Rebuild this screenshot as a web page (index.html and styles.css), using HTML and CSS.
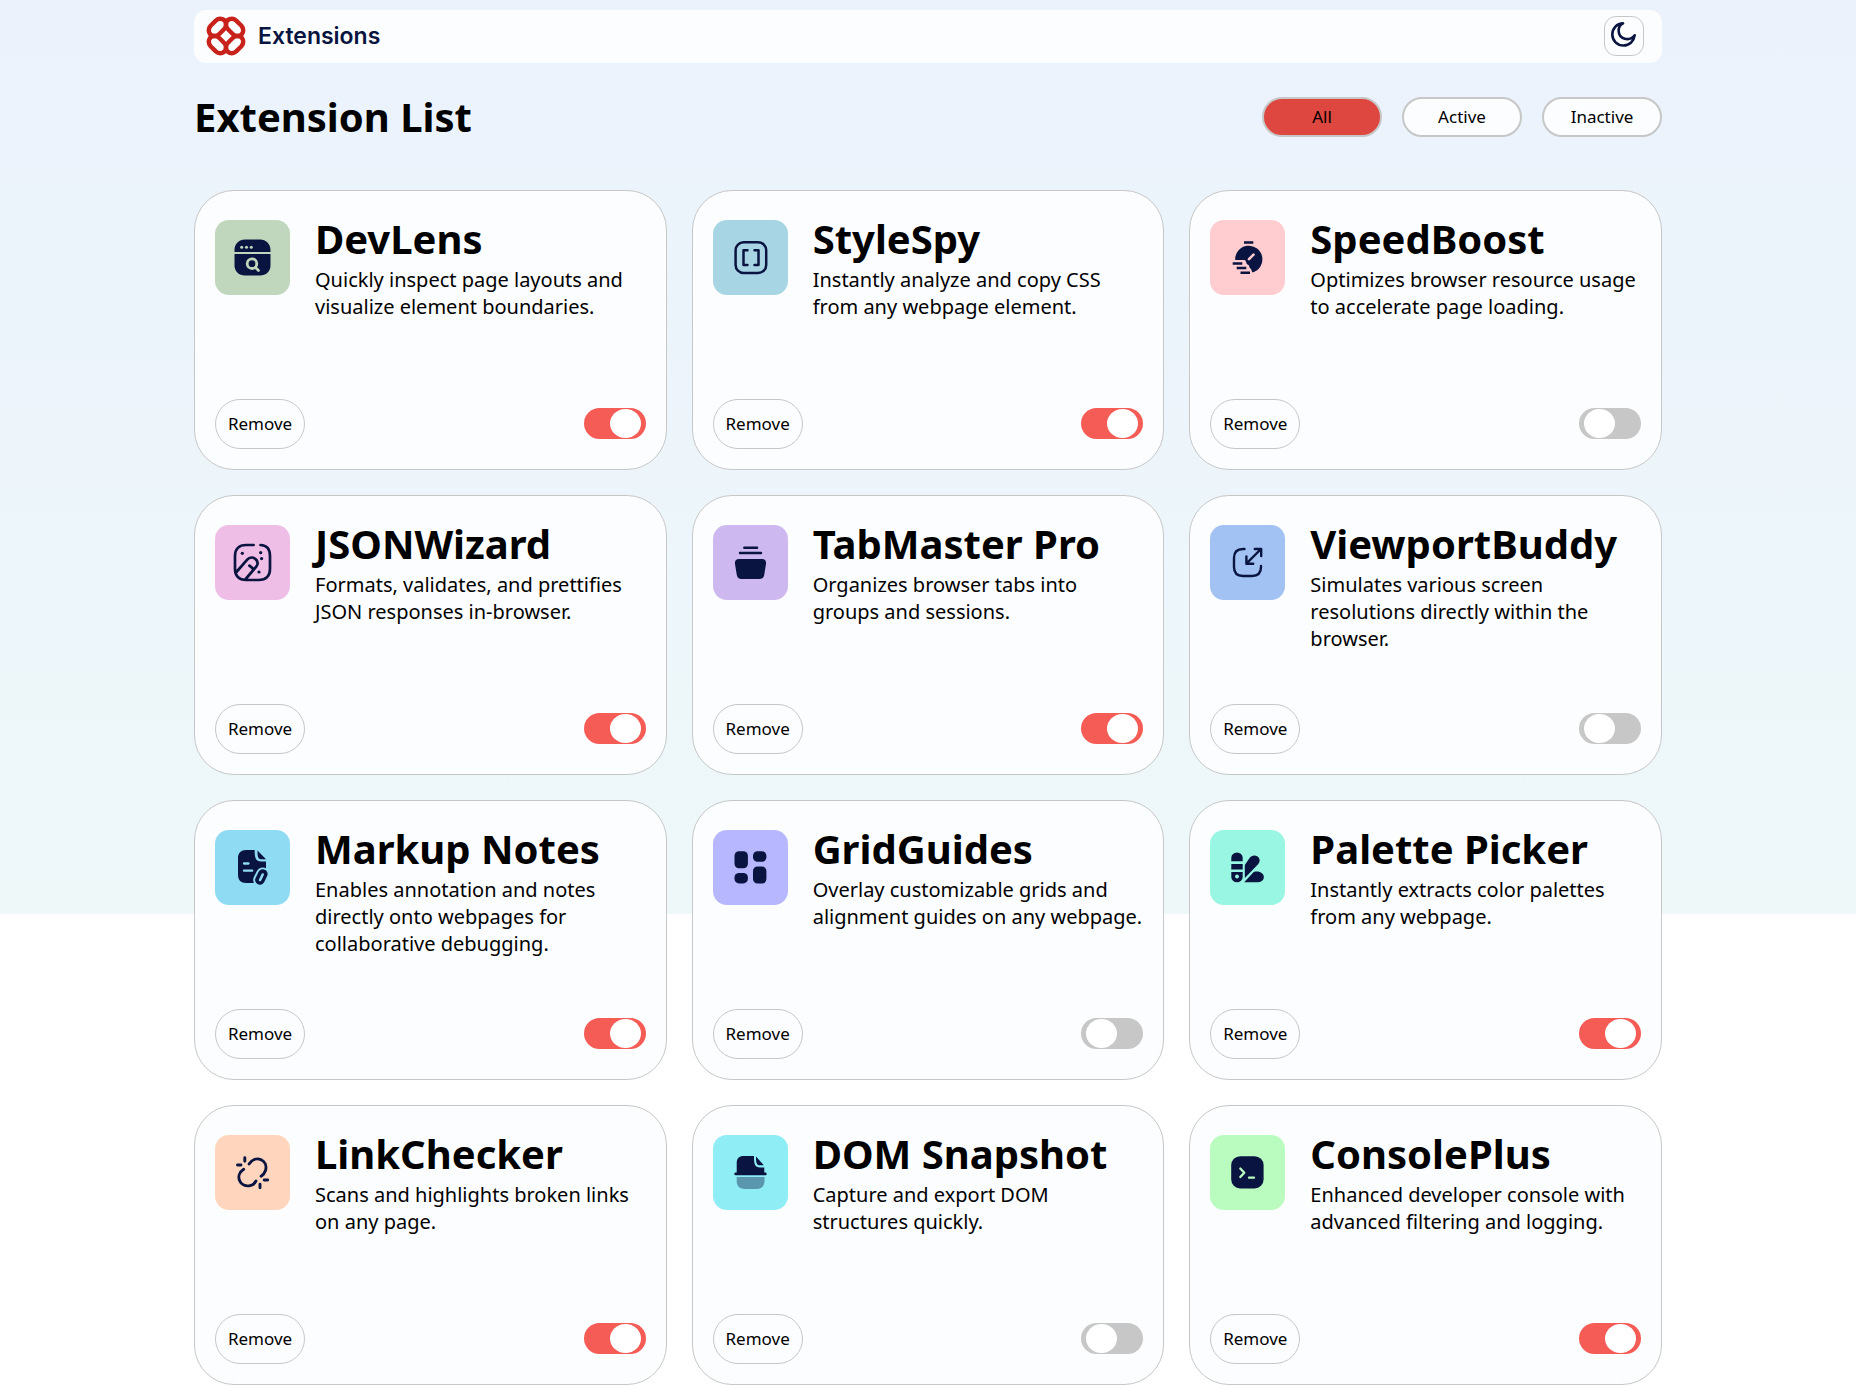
FILE: index.html
```html
<!DOCTYPE html>
<html lang="en">
<head>
<meta charset="utf-8">
<meta name="viewport" content="width=device-width, initial-scale=1">
<title>Extensions</title>
<link rel="stylesheet" href="styles.css">
</head>
<body>
<div class="page">
  <header class="topbar">
    <a class="brand" href="#">
      <svg class="brand-mark" viewBox="0 0 40 40" fill="none" stroke="#c8221b" stroke-width="4.400" aria-hidden="true">
        <g id="lobe"><path d="M4.600 9.800 9.800 4.600C13.600 1.200 20 3 20 8.200c0 2.400-.8 3.900-2 5.100L13.300 18c-1.200 1.200-2.700 2-5.100 2C3 20 1.200 13.600 4.600 9.800Z"/></g>
        <use href="#lobe" transform="rotate(90 20 20)"/>
        <use href="#lobe" transform="rotate(180 20 20)"/>
        <use href="#lobe" transform="rotate(270 20 20)"/>
      </svg>
      <span>Extensions</span>
    </a>
    <button class="theme-button" type="button" aria-label="Switch theme">
      <svg class="moon" viewBox="0 0 25 25" fill="none" stroke="#091540" stroke-width="2.600" stroke-linejoin="round" aria-hidden="true"><path d="M12 1.300C6 1.300 1.300 6.500 1.300 12.500c0 6.300 5 11 11.200 11 5.700 0 10.300-4 11.200-10.200C18.500 20 7.800 17.500 7.600 8.500c0-3 1.600-5.700 4.400-7.200Z"/></svg>
    </button>
  </header>

  <main>
    <div class="list-head">
      <h1>Extension List</h1>
      <div class="filters">
        <button class="filter filter-selected" type="button">All</button>
        <button class="filter" type="button">Active</button>
        <button class="filter" type="button">Inactive</button>
      </div>
    </div>

    <div class="cards">
      <article class="card">
        <div class="card-main">
          <svg class="tile sage" viewBox="0 0 75 75" aria-hidden="true"><path fill="#091540" d="M19.500 32v-2c0-6 4.500-10.500 10.500-10.500h15c6 0 10.500 4.500 10.500 10.500v2ZM19.500 34h36v11.500c0 6-4.500 10-10.500 10H30c-6 0-10.500-4-10.500-10Z"/><g fill="currentColor"><circle cx="26.700" cy="27.300" r="1.500"/><circle cx="31.500" cy="27.300" r="1.500"/><circle cx="36.300" cy="27.300" r="1.500"/></g><path d="m40.500 47.500 3 3" stroke="currentColor" stroke-width="2.600" stroke-linecap="round"/><circle cx="37" cy="43.700" r="4.800" fill="none" stroke="currentColor" stroke-width="2.800"/></svg>
          <div><h2>DevLens</h2><p>Quickly inspect page layouts and visualize element boundaries.</p></div>
        </div>
        <div class="card-actions"><button class="remove" type="button">Remove</button><input class="switch" type="checkbox" aria-label="Enable DevLens" checked></div>
      </article>

      <article class="card">
        <div class="card-main">
          <svg class="tile sky" viewBox="0 0 75 75" fill="none" stroke="#091540" stroke-width="2.500" stroke-linecap="round" stroke-linejoin="round" aria-hidden="true"><rect x="22.600" y="22.300" width="30.600" height="30.600" rx="8"/><path d="M34.500 30.200h-4v14.800h4M41.500 30.200h4v14.800h-4"/></svg>
          <div><h2>StyleSpy</h2><p>Instantly analyze and copy CSS from any webpage element.</p></div>
        </div>
        <div class="card-actions"><button class="remove" type="button">Remove</button><input class="switch" type="checkbox" aria-label="Enable StyleSpy" checked></div>
      </article>

      <article class="card">
        <div class="card-main">
          <svg class="tile rose" viewBox="0 0 75 75" aria-hidden="true"><path fill="#091540" d="M25.200 40a13.600 13.600 0 1 1 17.300 12.400c-1-.6-.7-3-1.800-3.600-1.700-.6-1-3.200-2.200-3.800-1.500-.6-2-1-2.200-2.400-.3-2-1.300-2.600-3-2.600Z"/><path d="m39 39.200 4.500-4.500" stroke="currentColor" stroke-width="2.600" stroke-linecap="round"/><path fill="none" stroke="#091540" stroke-width="2.500" d="M34 22.400h9.300M22.700 43.500h9.600M26.700 48h9.600M30.500 52.700H40"/></svg>
          <div><h2>SpeedBoost</h2><p>Optimizes browser resource usage to accelerate page loading.</p></div>
        </div>
        <div class="card-actions"><button class="remove" type="button">Remove</button><input class="switch" type="checkbox" aria-label="Enable SpeedBoost"></div>
      </article>

      <article class="card">
        <div class="card-main">
          <svg class="tile pink" viewBox="0 0 75 75" fill="none" stroke="#091540" stroke-width="2.700" stroke-linecap="round" aria-hidden="true"><path d="M38.600 20H31c-7 0-11 4-11 11v13c0 7 4 11 11 11h13c7 0 11-4 11-11V31c0-7-3.500-10.700-9.500-11M21 47.500l11.200-12.800c4.800-5.400 13.600 1 9.200 6.800L30.700 54M34.400 40.600l3.600 3"/><g fill="#091540" stroke="none"><circle cx="27.300" cy="28.300" r="1.600"/><circle cx="45.700" cy="27.700" r="1.600"/><circle cx="46.600" cy="33.600" r="1.600"/><circle cx="44" cy="47" r="1.600"/></g></svg>
          <div><h2>JSONWizard</h2><p>Formats, validates, and prettifies JSON responses in-browser.</p></div>
        </div>
        <div class="card-actions"><button class="remove" type="button">Remove</button><input class="switch" type="checkbox" aria-label="Enable JSONWizard" checked></div>
      </article>

      <article class="card">
        <div class="card-main">
          <svg class="tile lilac" viewBox="0 0 75 75" aria-hidden="true"><path stroke="#091540" stroke-width="2.400" stroke-linecap="round" d="M31.300 22.700h12.800M27 28h21"/><path fill="#091540" d="M26 34h23c3 0 4.500 2 4 5l-1.700 10.500c-.5 3-2 4.500-5 4.500H28.700c-3 0-4.500-1.500-5-4.500L22 39c-.5-3 1-5 4-5Z"/></svg>
          <div><h2>TabMaster Pro</h2><p>Organizes browser tabs into groups and sessions.</p></div>
        </div>
        <div class="card-actions"><button class="remove" type="button">Remove</button><input class="switch" type="checkbox" aria-label="Enable TabMaster Pro" checked></div>
      </article>

      <article class="card">
        <div class="card-main">
          <svg class="tile blue" viewBox="0 0 75 75" fill="none" stroke="#091540" stroke-width="2.400" stroke-linecap="round" stroke-linejoin="round" aria-hidden="true"><path d="M34.500 24H33c-6 0-9 3-9 9v9c0 6 3 9 9 9h9c6 0 9-3 9-9v-1M51 24 36.400 38.700M44.800 24H51.200v7M36.400 31.500v7.300h6.800"/></svg>
          <div><h2>ViewportBuddy</h2><p>Simulates various screen resolutions directly within the browser.</p></div>
        </div>
        <div class="card-actions"><button class="remove" type="button">Remove</button><input class="switch" type="checkbox" aria-label="Enable ViewportBuddy"></div>
      </article>

      <article class="card">
        <div class="card-main">
          <svg class="tile cyan" viewBox="0 0 75 75" aria-hidden="true"><path fill="#091540" d="M39.700 20c-.1 7 .8 11.500 6.300 11.500h5V53H31c-5 0-8-3-8-8V28c0-5 3-8 8-8ZM42.500 20.500l8.500 8.800h-4c-3.700 0-4.600-2-4.500-8.800Z"/><path stroke="currentColor" stroke-width="2.300" stroke-linecap="round" d="M29 33.500h4.500M29 40.700h8.200"/><path stroke="currentColor" stroke-width="14" stroke-linecap="round" d="m48 44.500-2.800 5.500"/><path stroke="#091540" stroke-width="9.600" stroke-linecap="round" d="m47.800 44-2.900 6"/><path stroke="currentColor" stroke-width="2.600" stroke-linecap="round" d="m47.700 44.500-2.600 5.500"/></svg>
          <div><h2>Markup Notes</h2><p>Enables annotation and notes directly onto webpages for collaborative debugging.</p></div>
        </div>
        <div class="card-actions"><button class="remove" type="button">Remove</button><input class="switch" type="checkbox" aria-label="Enable Markup Notes" checked></div>
      </article>

      <article class="card">
        <div class="card-main">
          <svg class="tile violet" viewBox="0 0 75 75" fill="#091540" aria-hidden="true"><rect x="21.500" y="21.200" width="13.400" height="17" rx="4.500"/><rect x="40" y="21.200" width="13.400" height="10.600" rx="4.500"/><rect x="21.500" y="43" width="13.400" height="10.400" rx="4.500"/><rect x="40" y="36.500" width="13.400" height="17" rx="4.500"/></svg>
          <div><h2>GridGuides</h2><p>Overlay customizable grids and alignment guides on any webpage.</p></div>
        </div>
        <div class="card-actions"><button class="remove" type="button">Remove</button><input class="switch" type="checkbox" aria-label="Enable GridGuides"></div>
      </article>

      <article class="card">
        <div class="card-main">
          <svg class="tile mint" viewBox="0 0 75 75" fill="#091540" aria-hidden="true"><path d="M21.300 31.200v-3.500a5.700 5.200 0 0 1 11.400 0v3.500ZM21.300 34h11.400v5.500H21.300ZM21.300 42h11.400v5a5.700 5.200 0 0 1-11.400 0ZM34.800 35l4.600-6.700c4.500-6.500 14-.5 8.700 6L34.800 48ZM34.200 52.200 43 42.800c1-1 2-1.200 3.500-1.200 9.600 0 9.600 10.600 1.500 10.600Z"/><circle cx="27" cy="46.500" r="1.900" fill="currentColor"/></svg>
          <div><h2>Palette Picker</h2><p>Instantly extracts color palettes from any webpage.</p></div>
        </div>
        <div class="card-actions"><button class="remove" type="button">Remove</button><input class="switch" type="checkbox" aria-label="Enable Palette Picker" checked></div>
      </article>

      <article class="card">
        <div class="card-main">
          <svg class="tile peach" viewBox="0 0 75 75" fill="none" stroke="#091540" stroke-width="2.900" stroke-linecap="round" aria-hidden="true"><path d="M34 29C40.500 19 53.500 25 50.500 35.500c-.8 2.600-2.200 4.200-4.400 5.700M28.700 34.300C19.500 40 24.500 53.500 36 50.300c2-.6 3.800-2 5-4.300M22.500 30H26M29.800 22.700v3.500M45 49.200v3.500M49.200 45h3.500"/></svg>
          <div><h2>LinkChecker</h2><p>Scans and highlights broken links on any page.</p></div>
        </div>
        <div class="card-actions"><button class="remove" type="button">Remove</button><input class="switch" type="checkbox" aria-label="Enable LinkChecker" checked></div>
      </article>

      <article class="card">
        <div class="card-main">
          <svg class="tile aqua" viewBox="0 0 75 75" fill="#091540" aria-hidden="true"><path d="M23.700 37.500V28c0-4.500 2.500-7 7-7H41c-.1 7 .5 11.500 6 11.500h4.300v5h1a1.400 1.400 0 0 1 0 2.800H22.700a1.400 1.400 0 0 1 0-2.800ZM43 21.500l7.800 8.800h-3.500c-3.600 0-4.400-2-4.300-8.800Z"/><path fill-opacity=".4" d="M23.700 42h27.800v4c0 5-3 8-8 8H31.700c-5 0-8-3-8-8Z"/></svg>
          <div><h2>DOM Snapshot</h2><p>Capture and export DOM structures quickly.</p></div>
        </div>
        <div class="card-actions"><button class="remove" type="button">Remove</button><input class="switch" type="checkbox" aria-label="Enable DOM Snapshot"></div>
      </article>

      <article class="card">
        <div class="card-main">
          <svg class="tile green" viewBox="0 0 75 75" fill="none" stroke="currentColor" stroke-width="2.300" stroke-linecap="round" stroke-linejoin="round" aria-hidden="true"><rect x="21.200" y="21.200" width="32.400" height="32.200" rx="9" fill="#091540" stroke="none"/><path d="m30.300 33.500 4 4.300-4 4.200M39 42.700h5"/></svg>
          <div><h2>ConsolePlus</h2><p>Enhanced developer console with advanced filtering and logging.</p></div>
        </div>
        <div class="card-actions"><button class="remove" type="button">Remove</button><input class="switch" type="checkbox" aria-label="Enable ConsolePlus" checked></div>
      </article>
    </div>
  </main>
</div>
</body>
</html>
```

FILE: styles.css
```css
* {
  box-sizing: border-box;
}

html {
  background: #fff linear-gradient(180deg, #ebf2fc 0%, #eef8f9 100%) no-repeat;
  background-size: 100% 66vh;
}

body {
  margin: 0;
  font: 20px/27px "Noto Sans", sans-serif;
  color: #000;
}

h1,
h2,
p {
  margin: 0;
}

h1,
h2 {
  font-size: 40px;
  line-height: 54px;
  font-weight: 700;
}

button {
  font: 17px/22px "Noto Sans", sans-serif;
  color: #000;
  background: #fcfdff;
  border: 1px solid #c7c7c7;
  padding: 0;
  cursor: pointer;
}

.page {
  max-width: 1468px;
  margin: 0 auto;
  padding-top: 10px;
}

.topbar {
  display: flex;
  align-items: center;
  justify-content: space-between;
  padding: 6px 18px 7px 12px;
  border-radius: 12px;
  background: #fcfdff;
}

.brand {
  display: flex;
  align-items: center;
  gap: 12px;
  color: #091540;
  font: 600 23px/28px Inter, sans-serif;
  text-decoration: none;
}

.brand-mark {
  width: 40px;
  height: 40px;
}

.theme-button {
  display: flex;
  justify-content: center;
  width: 40px;
  height: 40px;
  padding: 5px 2px 0 0;
  border-radius: 12px;
}

.moon {
  width: 25px;
  height: 25px;
}

.list-head {
  display: flex;
  flex-wrap: wrap;
  align-items: center;
  justify-content: space-between;
  gap: 20px;
  margin: 27px 0 46px;
}

.filters {
  display: flex;
  gap: 20px;
}

.filter {
  width: 120px;
  height: 40px;
  border-width: 2px;
  border-radius: 20px;
}

.filter-selected {
  background: #de473f;
}

.cards {
  display: grid;
  grid-template-columns: repeat(auto-fit, minmax(400px, 1fr));
  gap: 25px;
}

.card {
  display: flex;
  flex-direction: column;
  justify-content: space-between;
  min-height: 280px;
  padding: 21px 20px 20px;
  border: 1px solid #c7c7c7;
  border-radius: 40px;
  background: #fcfdff;
}

.card-main {
  display: flex;
  align-items: flex-start;
  gap: 25px;
}

.tile {
  flex: none;
  width: 75px;
  height: 75px;
  margin-top: 8px;
  border-radius: 14px;
  background: currentColor;
}

.sage { color: #c0d7bd; }
.sky { color: #a8d5e4; }
.rose { color: #ffcdd0; }
.pink { color: #efbee6; }
.lilac { color: #cdb9ef; }
.blue { color: #a2c2f3; }
.cyan { color: #8fdbf4; }
.violet { color: #b7b7ff; }
.mint { color: #99f6e2; }
.peach { color: #ffd6bd; }
.aqua { color: #8fedf5; }
.green { color: #bafcc0; }

.card-actions {
  display: flex;
  align-items: center;
  justify-content: space-between;
}

.remove {
  width: 90px;
  height: 50px;
  border-radius: 25px;
}

.switch {
  appearance: none;
  display: flex;
  align-items: center;
  width: 62px;
  height: 31px;
  margin: 0 0 1px;
  padding: 0 5px;
  border-radius: 16px;
  background: #c7c7c7;
  cursor: pointer;
}

.switch::before {
  content: "";
  width: 31px;
  height: 29px;
  border-radius: 50%;
  background: #fff;
}

.switch:checked {
  justify-content: flex-end;
  background: #f55c56;
}
```
